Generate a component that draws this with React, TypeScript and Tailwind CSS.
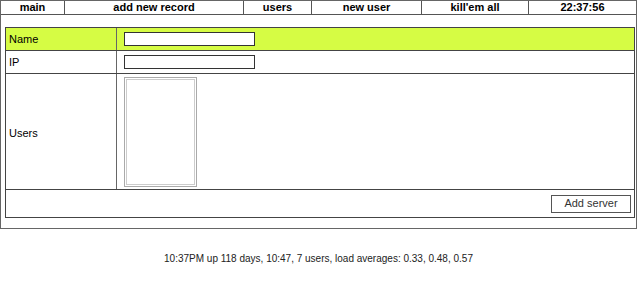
import React from 'react';

const navItems = [
  { label: 'main', w: 'w-[63px]' },
  { label: 'add new record', w: 'w-[179px]' },
  { label: 'users', w: 'w-[68px]' },
  { label: 'new user', w: 'w-[110px]' },
  { label: "kill'em all", w: 'w-[107px]' },
  { label: '22:37:56', w: 'flex-1' },
];

export default function App() {
  return (
    <div className="min-h-screen bg-white text-[11px] text-black font-['Liberation_Sans',Arial,sans-serif]">
      {/* Outer frame */}
      <div className="w-[637px] h-[229px] border border-[#666] flex flex-col">
        {/* Nav */}
        <div className="flex h-[14px] border-b border-[#555]">
          {navItems.map((item, i) => (
            <div
              key={item.label}
              className={`${item.w} ${i > 0 ? 'border-l border-[#555]' : ''} flex items-center justify-center font-bold leading-none`}
            >
              {item.label}
            </div>
          ))}
        </div>

        {/* Form table */}
        <div className="pl-[4px] pt-[12px]">
          <div className="w-[630px] border border-[#444] flex flex-col">
            <div className="flex h-[23px] bg-[#d6fc44] border-b border-[#444]">
              <div className="w-[111px] border-r border-[#666] flex items-center pl-[3px]">Name</div>
              <div className="flex-1 flex items-center pl-[7px]">
                <div className="w-[131px] h-[14px] bg-white border border-[#333]" />
              </div>
            </div>
            <div className="flex h-[23px] border-b border-[#444]">
              <div className="w-[111px] border-r border-[#666] flex items-center pl-[3px]">IP</div>
              <div className="flex-1 flex items-center pl-[7px]">
                <div className="w-[131px] h-[14px] bg-white border border-[#333]" />
              </div>
            </div>
            <div className="flex h-[116px] border-b border-[#444]">
              <div className="w-[111px] border-r border-[#666] flex items-center pl-[3px] pt-[3px]">Users</div>
              <div className="flex-1 pl-[7px] pt-[3px]">
                <div className="w-[73px] h-[110px] border border-[#aaa] p-[1px]">
                  <div className="w-full h-full border border-[#ccc]" />
                </div>
              </div>
            </div>
            <div className="flex h-[27px] items-center justify-end pr-[3px]">
              <button className="w-[80px] h-[18px] border border-[#555] bg-white text-[11px] text-[#333] leading-none">
                Add server
              </button>
            </div>
          </div>
        </div>
      </div>

      {/* Footer */}
      <div className="w-[637px] mt-[22px] text-center text-[10px] text-[#222]">
        10:37PM up 118 days, 10:47, 7 users, load averages: 0.33, 0.48, 0.57
      </div>
    </div>
  );
}
